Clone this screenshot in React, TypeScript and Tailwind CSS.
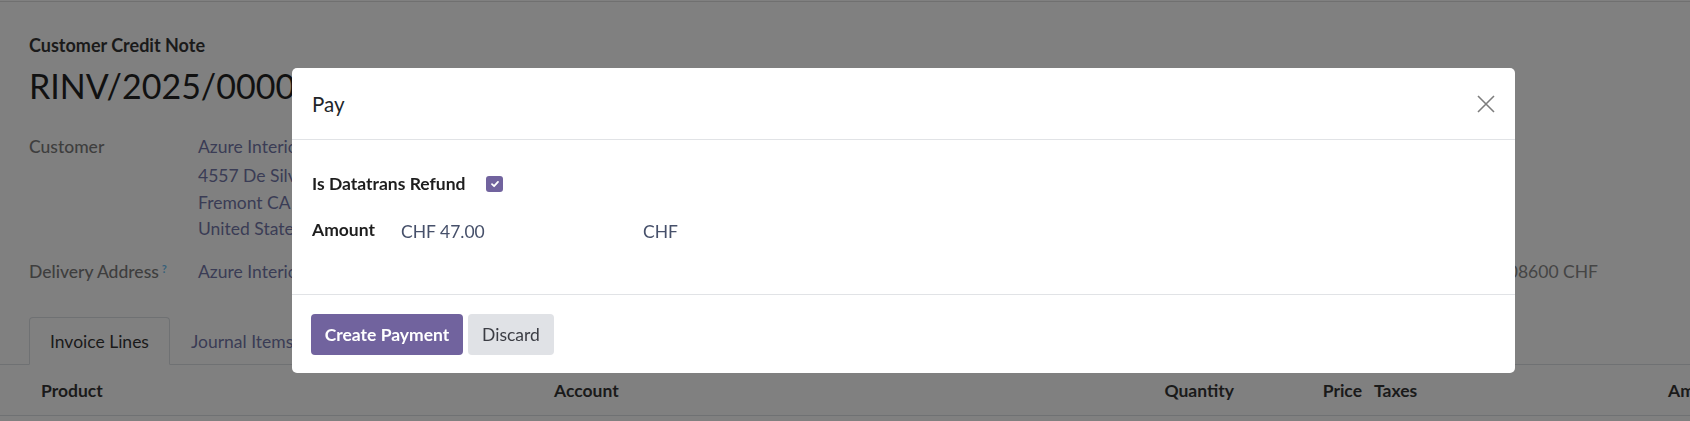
function CheckBox() {
  return (
    <span className="flex h-[16px] w-[17px] items-center justify-center rounded-[3px] bg-[#71639e]">
      <svg width="10" height="10" viewBox="0 0 10 10" fill="none">
        <path d="M2 5.2 4.1 7.2 8 2.9" stroke="white" strokeWidth="1.8" strokeLinecap="round" strokeLinejoin="round" />
      </svg>
    </span>
  );
}

function CloseIcon() {
  return (
    <svg width="18" height="18" viewBox="0 0 18 18" fill="none">
      <path d="M1 1 17 17M17 1 1 17" stroke="#7d7d7d" strokeWidth="1.6" />
    </svg>
  );
}

function PayDialog() {
  return (
    <div className="fixed left-[292px] top-[68px] flex h-[305px] w-[1223px] flex-col rounded-[5px] bg-white">
      <header className="flex h-[72px] items-center justify-between border-b border-[#e1e3e6] px-[20px]">
        <h4 className="text-[20.5px] leading-[28px] text-[#212529]">Pay</h4>
        <button className="flex h-[18px] w-[18px] items-center justify-center">
          <CloseIcon />
        </button>
      </header>

      <div className="h-[154px] px-[20px] pt-[30px] text-[17.5px] leading-[27px]">
        <div className="flex items-center gap-[21px]">
          <span className="font-bold text-[#1e1e1e]">Is Datatrans Refund</span>
          <CheckBox />
        </div>
        <div className="mt-[19px] flex items-start">
          <span className="w-[89px] font-bold text-[#1e1e1e]">Amount</span>
          <span className="mt-[2px] w-[242px] text-[#46506a]">CHF 47.00</span>
          <span className="mt-[2px] text-[#46506a]">CHF</span>
        </div>
      </div>

      <footer className="flex h-[79px] gap-[5px] border-t border-[#e1e3e6] pl-[19px] pt-[19px] text-[17.5px] leading-[27px]">
        <button className="h-[41px] w-[152px] rounded-[4px] bg-[#71639e] font-bold text-white">
          Create Payment
        </button>
        <button className="h-[41px] w-[86px] rounded-[4px] bg-[#e0e2e6] text-[#3b3d44]">
          Discard
        </button>
      </footer>
    </div>
  );
}

export default function App() {
  return (
    <div className="relative h-[421px] w-full overflow-hidden bg-[#808080] font-['Lato','Liberation_Sans',sans-serif] text-[17.5px] leading-[27px]">
      <div className="mt-px h-px bg-[#707070]" />

      <div className="pl-[29px]">
        <div className="mt-[31px] text-[18px] font-bold leading-[24px] text-[#1a1a1a]">
          Customer Credit Note
        </div>
        <h1 className="mt-[7px] whitespace-nowrap text-[34px] leading-[44px] text-[#111111]">
          RINV/2025/00001
        </h1>

        <div className="mt-[25px] flex">
          <span className="w-[169px] font-medium text-[#3e3e3e]">Customer</span>
          <div className="text-[#3a3c55]">
            <div className="mb-[3px]">Azure Interior</div>
            <div className="leading-[26.5px]">4557 De Silva St</div>
            <div className="leading-[26.5px]">Fremont CA 94538</div>
            <div className="leading-[26.5px]">United States</div>
          </div>
        </div>

        <div className="mt-[15.5px] flex pr-[92px]">
          <span className="w-[169px] font-medium text-[#3e3e3e]">
            Delivery Address
            <sup className="ml-[3px] text-[11px] font-bold text-[#37607a]">?</sup>
          </span>
          <span className="text-[#3a3c55]">Azure Interior</span>
          <span className="ml-auto text-[#454545]">1 USD = 0.908600 CHF</span>
        </div>
      </div>

      <div className="mt-[32px] flex border-b border-[#6f7173] pl-[29px]">
        <div className="-mb-px flex h-[48px] items-center rounded-t-[4px] border border-[#6f7173] border-b-[#808080] px-[20px] text-[#1a1a1a]">
          Invoice Lines
        </div>
        <div className="-mb-px flex h-[48px] items-center border border-transparent px-[20px] text-[#3a3c55]">
          Journal Items
        </div>
      </div>

      <div className="flex h-[51px] items-center whitespace-nowrap border-b border-[#6f7173] font-bold text-[#1a1a1a]">
        <div className="w-[541px] shrink-0 pl-[41px]">Product</div>
        <div className="w-[559px] shrink-0 pl-[13px]">Account</div>
        <div className="w-[146px] shrink-0 pr-[12px] text-right">Quantity</div>
        <div className="w-[122px] shrink-0 pr-[6px] text-right">Price</div>
        <div className="w-[288px] shrink-0 pl-[6px]">Taxes</div>
        <div className="shrink-0 pl-[12px]">Amount</div>
      </div>

      <PayDialog />
    </div>
  );
}
